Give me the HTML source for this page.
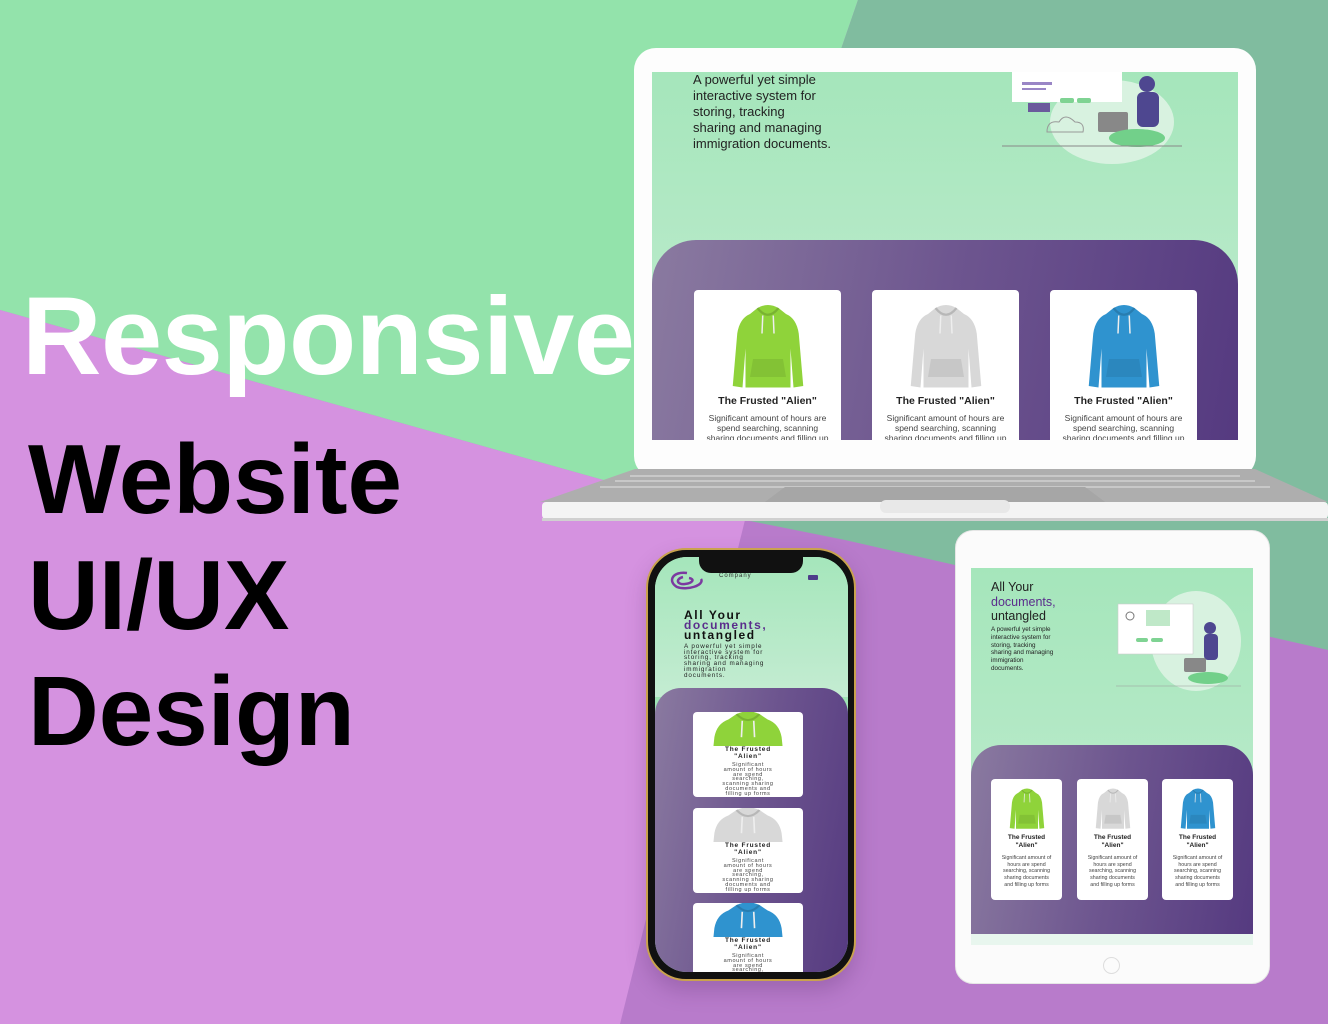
<!DOCTYPE html>
<html><head><meta charset="utf-8">
<style>
*{margin:0;padding:0;box-sizing:border-box}
body{width:1328px;height:1024px;overflow:hidden;position:relative;font-family:"Liberation Sans",sans-serif;background:#b87bcb}
.abs{position:absolute}
.big{position:absolute;left:24px;font-family:"Liberation Sans",sans-serif;line-height:1;white-space:nowrap}
.card{position:absolute;background:#fff;border-radius:4px;text-align:center;overflow:hidden;color:#222}
.card svg{display:block;margin:0 auto}
.t{font-weight:bold}
.pur{background:linear-gradient(100deg,#8a7aa0 0%,#6d558f 50%,#553a80 100%)}
.green{background:linear-gradient(180deg,#a5e6bb 0%,#c4ecd2 100%)}
</style></head><body>
<svg class="abs" style="left:0;top:0" width="1328" height="1024">
<polygon points="0,0 858,0 720,400 745,520 0,310" fill="#93e3ab"/>
<polygon points="858,0 1328,0 1328,650 845,540 745,520 720,400" fill="#80bc9f"/>
<polygon points="0,310 745,520 620,1024 0,1024" fill="#d592e0"/>
<defs>
<symbol id="hd" viewBox="0 0 100 120">
<path d="M36 8 Q50 0 64 8 L74 16 Q88 22 91 42 L97 112 L84 114 L80 62 L80 114 L20 114 L20 62 L16 114 L3 112 L9 42 Q12 22 26 16 Z" fill="currentColor"/>
<path d="M36 8 Q50 26 64 8" fill="none" stroke="#000" stroke-opacity=".15" stroke-width="3"/>
<path d="M30 76 L70 76 L74 100 L26 100 Z" fill="#000" fill-opacity=".08"/>
<path d="M43 18 L42 42 M57 18 L58 42" stroke="#eee" stroke-width="2"/>
</symbol>
</defs>
</svg>

<div class="big" style="top:282px;left:22px;font-size:110px;font-weight:bold;color:#fff;letter-spacing:-0.5px">Responsive</div>
<div class="big" style="top:430px;left:28px;font-size:98px;font-weight:bold;color:#000">Website</div>
<div class="big" style="top:546px;left:28px;font-size:98px;font-weight:bold;color:#000">UI/UX</div>
<div class="big" style="top:662px;left:28px;font-size:98px;font-weight:bold;color:#000">Design</div>

<!-- Laptop -->
<div class="abs" style="left:634px;top:48px;width:622px;height:430px;background:#fdfdfd;border-radius:22px"></div>
<div class="abs green" style="left:652px;top:72px;width:586px;height:368px;overflow:hidden">
  <div class="abs" style="left:41px;top:0;font-size:13px;line-height:16px;color:#222">A powerful yet simple<br>interactive system for<br>storing, tracking<br>sharing and managing<br>immigration documents.</div>
  <svg class="abs" style="left:350px;top:0" width="180" height="95">
    <ellipse cx="110" cy="50" rx="62" ry="42" fill="#d8f2e0"/>
    <rect x="10" y="0" width="110" height="30" fill="#fff"/>
    <rect x="20" y="10" width="30" height="3" fill="#9a86c6"/><rect x="20" y="16" width="24" height="2" fill="#9a86c6"/>
    <rect x="58" y="26" width="14" height="5" rx="2" fill="#7fd393"/><rect x="75" y="26" width="14" height="5" rx="2" fill="#7fd393"/>
    <rect x="26" y="31" width="22" height="9" fill="#6a5a9c"/>
    <path d="M45 60 q0-12 12-10 q6-10 16 0 q10 0 8 10 z" fill="none" stroke="#999" stroke-width="1"/>
    <rect x="135" y="20" width="22" height="35" rx="6" fill="#4e4790"/>
    <circle cx="145" cy="12" r="8" fill="#4e4790"/>
    <rect x="96" y="40" width="30" height="20" rx="2" fill="#888"/>
    <ellipse cx="135" cy="66" rx="28" ry="9" fill="#72d08a"/>
    <line x1="0" y1="74" x2="180" y2="74" stroke="#888"/>
  </svg>
  <div class="abs pur" style="left:0;top:168px;width:586px;height:210px;border-radius:44px 44px 0 0"></div>
  <div class="card" style="left:42px;top:218px;width:147px;height:160px"><svg style="margin-top:12px" width="90" height="90"><use href="#hd" color="#8fd33a"/></svg><div class="t" style="font-size:10.5px;margin-top:3px">The Frusted "Alien"</div><div style="font-size:8.5px;line-height:10px;margin-top:6px;color:#444">Significant amount of hours are<br>spend searching, scanning<br>sharing documents and filling up</div></div>
  <div class="card" style="left:220px;top:218px;width:147px;height:160px"><svg style="margin-top:12px" width="90" height="90"><use href="#hd" color="#d8d8d8"/></svg><div class="t" style="font-size:10.5px;margin-top:3px">The Frusted "Alien"</div><div style="font-size:8.5px;line-height:10px;margin-top:6px;color:#444">Significant amount of hours are<br>spend searching, scanning<br>sharing documents and filling up</div></div>
  <div class="card" style="left:398px;top:218px;width:147px;height:160px"><svg style="margin-top:12px" width="90" height="90"><use href="#hd" color="#2f93cf"/></svg><div class="t" style="font-size:10.5px;margin-top:3px">The Frusted "Alien"</div><div style="font-size:8.5px;line-height:10px;margin-top:6px;color:#444">Significant amount of hours are<br>spend searching, scanning<br>sharing documents and filling up</div></div>
</div>
<svg class="abs" style="left:540px;top:466px" width="788" height="60">
  <polygon points="95,3 715,3 788,36 0,36" fill="#aeaeae"/>
  <g stroke="#c8c8c8" stroke-width="2"><line x1="90" y1="10" x2="700" y2="10"/><line x1="75" y1="15" x2="715" y2="15"/><line x1="60" y1="21" x2="730" y2="21"/></g>
  <polygon points="245,21 545,21 565,36 225,36" fill="#a6a6a6"/>
  <rect x="2" y="36" width="786" height="17" rx="4" fill="#f4f4f4"/>
  <rect x="340" y="34" width="130" height="13" rx="6" fill="#e8e8e8"/>
  <rect x="2" y="52" width="786" height="3" fill="#d0d0d0"/>
</svg>

<!-- Phone -->
<div class="abs" style="left:646px;top:548px;width:210px;height:433px;background:#111;border:2px solid #c9a24e;border-radius:40px;box-shadow:0 10px 20px rgba(80,40,100,.25)"></div>
<div class="abs" style="left:655px;top:557px;width:193px;height:415px;border-radius:32px;overflow:hidden;background:#9fe4b4">
  <div class="abs green" style="left:0;top:0;width:193px;height:140px"></div>
  <div class="abs" style="left:44px;top:0;width:104px;height:16px;background:#111;border-radius:0 0 12px 12px"></div>
  <svg class="abs" style="left:10px;top:12px" width="44" height="22"><path d="M22 4 C8 2 2 12 12 18 C22 22 40 16 36 10 M18 8 C10 10 12 16 20 15 C28 14 30 10 24 9" fill="none" stroke="#7b3aa0" stroke-width="2.5"/></svg>
  <div class="abs" style="left:64px;top:16px;font-size:6px;letter-spacing:1px;color:#333">Company</div>
  <div class="abs" style="left:153px;top:18px;width:10px;height:5px;background:#4e3c8a;border-radius:1px"></div>
  <div class="abs" style="left:29px;top:53px;font-size:12px;line-height:10px;font-weight:bold;letter-spacing:1.6px;color:#111">All Your<br><span style="color:#5a2d8c">documents,</span><br>untangled</div>
  <div class="abs" style="left:29px;top:87px;font-size:6.3px;line-height:5.7px;letter-spacing:.9px;color:#222">A powerful yet simple<br>interactive system for<br>storing, tracking<br>sharing and managing<br>immigration<br>documents.</div>
  <div class="abs pur" style="left:0;top:131px;width:193px;height:300px;border-radius:26px 26px 0 0"></div>
  <div class="card" style="left:38px;top:155px;width:110px;height:85px"><svg width="82" height="34" viewBox="0 0 100 50" preserveAspectRatio="none"><use href="#hd" color="#8fd33a" width="100" height="120" y="-5"/></svg><div class="t" style="font-size:6.5px;line-height:7px;letter-spacing:.8px">The Frusted<br>"Alien"</div><div style="font-size:5.5px;line-height:4.8px;letter-spacing:.6px;margin-top:3px;color:#444">Significant<br>amount of hours<br>are spend<br>searching,<br>scanning sharing<br>documents and<br>filling  up forms</div></div>
  <div class="card" style="left:38px;top:251px;width:110px;height:85px"><svg width="82" height="34" viewBox="0 0 100 50" preserveAspectRatio="none"><use href="#hd" color="#d8d8d8" width="100" height="120" y="-5"/></svg><div class="t" style="font-size:6.5px;line-height:7px;letter-spacing:.8px">The Frusted<br>"Alien"</div><div style="font-size:5.5px;line-height:4.8px;letter-spacing:.6px;margin-top:3px;color:#444">Significant<br>amount of hours<br>are spend<br>searching,<br>scanning sharing<br>documents and<br>filling  up forms</div></div>
  <div class="card" style="left:38px;top:346px;width:110px;height:85px"><svg width="82" height="34" viewBox="0 0 100 50" preserveAspectRatio="none"><use href="#hd" color="#2f93cf" width="100" height="120" y="-5"/></svg><div class="t" style="font-size:6.5px;line-height:7px;letter-spacing:.8px">The Frusted<br>"Alien"</div><div style="font-size:5.5px;line-height:4.8px;letter-spacing:.6px;margin-top:3px;color:#444">Significant<br>amount of hours<br>are spend<br>searching,</div></div>
</div>

<!-- Tablet -->
<div class="abs" style="left:955px;top:530px;width:315px;height:454px;background:#fbfbfb;border-radius:18px;border:1px solid #e6e6e6"></div>
<div class="abs green" style="left:971px;top:568px;width:282px;height:377px;overflow:hidden">
  <div class="abs" style="left:20px;top:12px;font-size:12.5px;line-height:14.5px;color:#222">All Your<br><span style="color:#5a2d8c">documents,</span><br>untangled</div>
  <div class="abs" style="left:20px;top:58px;font-size:6.3px;line-height:7.8px;color:#222">A powerful yet simple<br>interactive system for<br>storing, tracking<br>sharing and managing<br>immigration<br>documents.</div>
  <svg class="abs" style="left:145px;top:18px" width="125" height="110">
    <ellipse cx="80" cy="55" rx="45" ry="50" fill="#d8f2e0"/>
    <rect x="2" y="18" width="75" height="50" fill="#fff" stroke="#ccc" stroke-width=".6"/>
    <rect x="30" y="24" width="24" height="16" fill="#bfe8c8"/>
    <circle cx="14" cy="30" r="4" fill="none" stroke="#777"/>
    <rect x="20" y="52" width="12" height="4" rx="2" fill="#7fd393"/><rect x="35" y="52" width="12" height="4" rx="2" fill="#7fd393"/>
    <rect x="88" y="48" width="14" height="26" rx="4" fill="#4e4790"/><circle cx="94" cy="42" r="6" fill="#4e4790"/>
    <rect x="68" y="72" width="22" height="14" rx="2" fill="#888"/>
    <ellipse cx="92" cy="92" rx="20" ry="6" fill="#72d08a"/>
    <line x1="0" y1="100" x2="125" y2="100" stroke="#999" stroke-width=".6"/>
  </svg>
  <div class="abs pur" style="left:0;top:177px;width:282px;height:189px;border-radius:30px 30px 0 0"></div>
  <div class="abs" style="left:0;top:366px;width:282px;height:11px;background:#e8f6ee"></div>
  <div class="card" style="left:20px;top:211px;width:71px;height:121px"><svg style="margin-top:8px" width="44" height="44"><use href="#hd" color="#8fd33a"/></svg><div class="t" style="font-size:6.5px;line-height:8px;margin-top:3px">The Frusted<br>"Alien"</div><div style="font-size:5.3px;line-height:6.7px;margin-top:5px;color:#444">Significant amount of<br>hours are spend<br>searching, scanning<br>sharing documents<br>and filling  up forms</div></div>
  <div class="card" style="left:106px;top:211px;width:71px;height:121px"><svg style="margin-top:8px" width="44" height="44"><use href="#hd" color="#d8d8d8"/></svg><div class="t" style="font-size:6.5px;line-height:8px;margin-top:3px">The Frusted<br>"Alien"</div><div style="font-size:5.3px;line-height:6.7px;margin-top:5px;color:#444">Significant amount of<br>hours are spend<br>searching, scanning<br>sharing documents<br>and filling  up forms</div></div>
  <div class="card" style="left:191px;top:211px;width:71px;height:121px"><svg style="margin-top:8px" width="44" height="44"><use href="#hd" color="#2f93cf"/></svg><div class="t" style="font-size:6.5px;line-height:8px;margin-top:3px">The Frusted<br>"Alien"</div><div style="font-size:5.3px;line-height:6.7px;margin-top:5px;color:#444">Significant amount of<br>hours are spend<br>searching, scanning<br>sharing documents<br>and filling  up forms</div></div>
</div>
<div class="abs" style="left:1103px;top:957px;width:17px;height:17px;border-radius:50%;border:1px solid #ddd"></div>
</body></html>
